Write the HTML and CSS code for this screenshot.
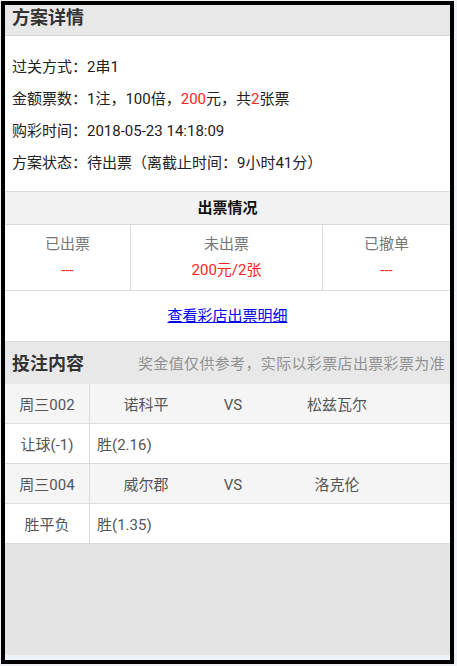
FILE: index.html
```html
<!DOCTYPE html>
<html lang="zh-CN">
<head>
<meta charset="utf-8">
<title>方案详情</title>
<link rel="stylesheet" href="styles.css">
</head>
<body>
<div class="frame">
  <div class="screen">
    <div class="band title">方案详情</div>
    <div class="info">
      <p>过关方式：2串1</p>
      <p>金额票数：1注，100倍，<span class="red">200</span>元，共<span class="red">2</span>张票</p>
      <p>购彩时间：2018-05-23 14:18:09</p>
      <p>方案状态：待出票（离截止时间：9小时41分）</p>
    </div>
    <div class="band sub">出票情况</div>
    <div class="stats">
      <div class="stat"><div class="label">已出票</div><div class="value">---</div></div>
      <div class="stat"><div class="label">未出票</div><div class="value">200元/2张</div></div>
      <div class="stat"><div class="label">已撤单</div><div class="value">---</div></div>
    </div>
    <div class="linkrow"><a href="#">查看彩店出票明细</a></div>
    <div class="band title bet"><span>投注内容</span><span class="note">奖金值仅供参考，实际以彩票店出票彩票为准</span></div>
    <div class="table">
      <div class="row match">
        <div class="c1">周三002</div>
        <div class="team">诺科平</div>
        <div class="vs">VS</div>
        <div class="team">松兹瓦尔</div>
      </div>
      <div class="row pick">
        <div class="c1">让球(-1)</div>
        <div class="sel">胜(2.16)</div>
      </div>
      <div class="row match">
        <div class="c1">周三004</div>
        <div class="team">威尔郡</div>
        <div class="vs">VS</div>
        <div class="team">洛克伦</div>
      </div>
      <div class="row pick">
        <div class="c1">胜平负</div>
        <div class="sel">胜(1.35)</div>
      </div>
    </div>
    <div class="filler"></div>
    <div class="strip"></div>
  </div>
</div>
</body>
</html>
```

FILE: styles.css
```css
* { box-sizing: border-box; }
html, body {
  margin: 0;
  padding: 0;
  background: #eef2f7;
}
body {
  font-family: Roboto, "Noto Sans CJK SC", sans-serif;
  font-size: 15px;
  color: #222;
  padding: 1px 0 0 1px;
}
.frame {
  width: 453px;
  height: 663px;
  border: 4px solid #000;
}
.screen {
  height: 100%;
  display: flex;
  flex-direction: column;
  background: #e5e5e5;
}
.band {
  flex: none;
}
.title {
  height: 31px;
  line-height: 26px;
  padding-left: 7px;
  background: #e8e8e8;
  border-bottom: 1px solid #d6d6d6;
  font-size: 18px;
  font-weight: bold;
  color: #333;
}
.info {
  background: #fff;
  padding: 15px 0 12px 7px;
}
.info p {
  margin: 0;
  line-height: 32px;
}
.red { color: #ff2323; }
.sub {
  height: 34px;
  line-height: 33px;
  background: #f2f2f2;
  border-top: 1px solid #dcdcdc;
  border-bottom: 1px solid #dcdcdc;
  text-align: center;
  font-weight: bold;
  color: #111;
}
.stats {
  display: grid;
  grid-template-columns: 126px 192px 1fr;
  background: #fff;
  border-bottom: 1px solid #dcdcdc;
}
.stat {
  padding: 9px 0 10px;
  text-align: center;
  border-right: 1px solid #dcdcdc;
}
.stat:last-child { border-right: none; }
.label {
  line-height: 20px;
  color: #777;
}
.value {
  margin-top: 6px;
  line-height: 20px;
  color: #ff2323;
}
.linkrow {
  height: 51px;
  line-height: 51px;
  text-align: center;
  background: #fff;
  border-bottom: 1px solid #dcdcdc;
}
.linkrow a {
  color: #0000ee;
  text-decoration: underline;
}
.bet {
  height: 42px;
  line-height: 44px;
  border-bottom: none;
  display: flex;
  justify-content: space-between;
  padding-right: 5px;
}
.note {
  font-size: 15px;
  font-weight: normal;
  color: #909090;
  letter-spacing: 0.35px;
}
.table {
  flex: none;
}
.row {
  display: grid;
  height: 40px;
  line-height: 42px;
  border-bottom: 1px solid #dcdcdc;
  color: #555;
}
.match {
  grid-template-columns: 85px 112px 62px 146px 1fr;
  background: #f5f5f5;
}
.pick {
  grid-template-columns: 85px 1fr;
  background: #fff;
}
.c1 {
  text-align: center;
  border-right: 1px solid #dcdcdc;
}
.team, .vs {
  text-align: center;
}
.sel {
  padding-left: 7px;
}
.filler {
  flex: 1;
}
.strip {
  flex: none;
  height: 5px;
  background: #eef2f7;
}
```
